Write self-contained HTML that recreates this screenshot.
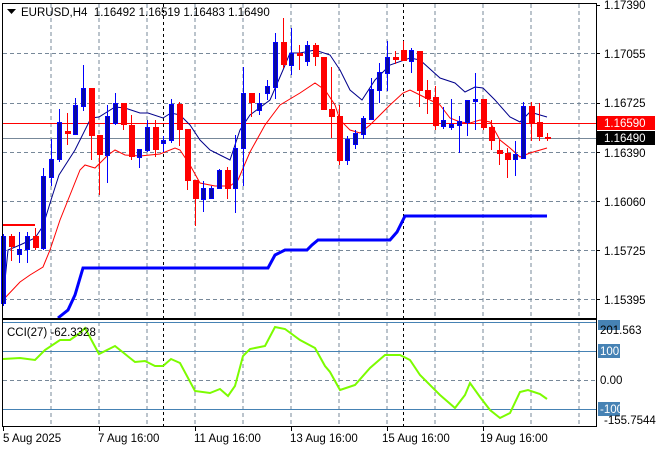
<!DOCTYPE html>
<html><head><meta charset="utf-8"><style>
html,body{margin:0;padding:0;background:#fff;width:660px;height:450px;overflow:hidden}
svg{display:block}
text{font-family:"Liberation Sans",sans-serif;font-size:11.5px;fill:#000}
</style></head><body>
<svg width="660" height="450" viewBox="0 0 660 450" xmlns="http://www.w3.org/2000/svg">
<rect width="660" height="450" fill="#fff"/>
<g stroke="#778899" stroke-width="1" stroke-dasharray="4,3" fill="none">
<path d="M51 4V318M99 4V318M147 4V318M195 4V318M243 4V318M291 4V318M339 4V318M387 4V318M435 4V318M483 4V318M531 4V318M579 4V318"/>
<path d="M3 53.5H596M3 103.5H596M3 152.5H596M3 201.5H596M3 250.5H596M3 299.5H596"/>
<path d="M51 322V426M99 322V426M147 322V426M195 322V426M243 322V426M291 322V426M339 322V426M387 322V426M435 322V426M483 322V426M531 322V426M579 322V426M3 380.5H596"/>
</g>
<path d="M163.5 4V318M403.5 4V318M163.5 322V426M403.5 322V426" stroke="#000" stroke-dasharray="3,3"/>
<path d="M3 123.5H596" stroke="#ff0000"/>
<path d="M3 138.5H596" stroke="#778899"/>
<path d="M3 225H35" stroke="#ff0000" stroke-width="2"/>
<polyline fill="none" stroke="#0000ff" stroke-width="3" points="58,318 68,310 75,295 83,268 268,268 275,255 285,250 307,250 312,245 318,240 390,240 397,232 405,216 547,216"/>
<polyline fill="none" stroke="#00008b" stroke-width="1" points="3,301 8,250 20,245 35,238 43,226 51,200 59,175 75,150 91,118 99,117 115,107 125,108 140,113 148,113 163,118 171,113 180,115 190,125 200,140 210,150 220,155 230,160 240,130 250,115 270,100 283,70 290,53 300,53 315,50 330,55 340,70 350,90 362,100 375,80 390,65 410,58 420,60 440,78 455,83 465,92 475,87 483,88 495,100 510,117 520,122 530,112 540,115 547,117"/>
<polyline fill="none" stroke="#ff0000" stroke-width="1" points="3,300 20,282 30,275 43,267 50,250 60,220 70,195 80,170 85,165 95,168 108,155 115,150 125,155 140,156 160,154 175,148 180,150 190,165 200,183 215,186 230,186 238,180 250,152 265,125 280,105 300,93 315,83 325,90 335,105 340,120 350,130 360,133 370,125 380,115 390,105 403,93 410,90 420,95 430,100 440,105 450,118 460,122 470,123 480,120 490,122 500,140 510,148 520,157 530,153 547,148"/>
<g id="c"></g>
<g>
<!-- candles -->
<g stroke-width="1">
<path stroke="#0000ff" d="M3.5 234V306M19.5 232V263M27.5 232V263M43.5 168V250M51.5 139V186M59.5 109V162M75.5 98V134M83.5 65V111M107.5 105V183M115.5 93V125M139.5 149V168M147.5 120V152M163.5 136V152M171.5 99V143M203.5 181V212M211.5 186V199M219.5 169V188M235.5 135V213M243.5 67V186M259.5 93V115M267.5 80V100M275.5 33V99M291.5 28V75M307.5 41V66M347.5 136V165M355.5 130V149M363.5 116V139M371.5 78V120M379.5 63V103M387.5 41V91M411.5 48V73M443.5 107V129M451.5 99V130M459.5 116V153M467.5 100V136M475.5 73V130M515.5 141V176M523.5 102V159"/>
<path stroke="#ff0000" d="M11.5 234V261M35.5 228V250M67.5 113V145M91.5 88V160M99.5 135V195M123.5 103V130M131.5 115V160M155.5 120V157M179.5 102V146M187.5 129V190M195.5 180V226M227.5 167V199M251.5 93V117M283.5 18V68M299.5 45V70M315.5 43V66M323.5 57V110M331.5 67V138M339.5 105V165M395.5 51V64M403.5 41V61M419.5 51V107M427.5 80V114M435.5 86V130M483.5 99V130M491.5 120V150M499.5 140V165M507.5 148V178M531.5 102V141M539.5 103V141M547.5 133V141"/>
</g>
<g fill="#0a0aa0" stroke="#0000ff">
<rect x="1.5" y="236.5" width="4" height="67"/><rect x="17.5" y="249.5" width="4" height="5"/><rect x="25.5" y="236.5" width="4" height="13"/><rect x="41.5" y="176.5" width="4" height="72"/><rect x="49.5" y="159.5" width="4" height="18"/><rect x="57.5" y="122.5" width="4" height="37"/><rect x="73.5" y="105.5" width="4" height="29"/><rect x="81.5" y="88.5" width="4" height="18"/><rect x="105.5" y="116.5" width="4" height="39"/><rect x="113.5" y="103.5" width="4" height="20"/><rect x="137.5" y="149.5" width="4" height="8"/><rect x="145.5" y="127.5" width="4" height="23"/><rect x="161.5" y="140.5" width="4" height="3"/><rect x="169.5" y="104.5" width="4" height="36"/><rect x="201.5" y="188.5" width="4" height="11"/><rect x="209.5" y="188.5" width="4" height="10"/><rect x="217.5" y="170.5" width="4" height="18"/><rect x="233.5" y="148.5" width="4" height="40"/><rect x="241.5" y="93.5" width="4" height="55"/><rect x="257.5" y="103.5" width="4" height="7"/><rect x="265.5" y="86.5" width="4" height="7"/><rect x="273.5" y="42.5" width="4" height="45"/><rect x="289.5" y="53.5" width="4" height="12"/><rect x="305.5" y="45.5" width="4" height="16"/><rect x="345.5" y="139.5" width="4" height="21"/><rect x="353.5" y="133.5" width="4" height="11"/><rect x="361.5" y="118.5" width="4" height="16"/><rect x="369.5" y="89.5" width="4" height="30"/><rect x="377.5" y="72.5" width="4" height="18"/><rect x="385.5" y="57.5" width="4" height="16"/><rect x="409.5" y="50.5" width="4" height="11"/><rect x="441.5" y="120.5" width="4" height="6"/><rect x="449.5" y="124.5" width="4" height="3"/><rect x="457.5" y="121.5" width="4" height="4"/><rect x="465.5" y="100.5" width="4" height="22"/><rect x="473.5" y="99.5" width="4" height="2"/><rect x="513.5" y="154.5" width="4" height="5"/><rect x="521.5" y="106.5" width="4" height="52"/>
</g>
<g fill="#ff0000">
<rect x="9" y="236" width="6" height="11"/><rect x="33" y="236" width="6" height="12"/><rect x="65" y="131" width="6" height="3"/><rect x="89" y="88" width="6" height="48"/><rect x="97" y="135" width="6" height="20"/><rect x="121" y="103" width="6" height="22"/><rect x="129" y="125" width="6" height="32"/><rect x="153" y="127" width="6" height="23"/><rect x="177" y="104" width="6" height="26"/><rect x="185" y="129" width="6" height="52"/><rect x="193" y="180" width="6" height="19"/><rect x="225" y="170" width="6" height="19"/><rect x="249" y="93" width="6" height="10"/><rect x="281" y="42" width="6" height="23"/><rect x="297" y="53" width="6" height="3"/><rect x="313" y="45" width="6" height="12"/><rect x="321" y="57" width="6" height="53"/><rect x="329" y="109" width="6" height="8"/><rect x="337" y="116" width="6" height="45"/><rect x="393" y="57" width="6" height="3"/><rect x="401" y="50" width="6" height="11"/><rect x="417" y="51" width="6" height="40"/><rect x="425" y="90" width="6" height="9"/><rect x="433" y="97" width="6" height="29"/><rect x="481" y="99" width="6" height="29"/><rect x="489" y="127" width="6" height="14"/><rect x="497" y="150" width="6" height="4"/><rect x="505" y="153" width="6" height="7"/><rect x="529" y="106" width="6" height="18"/><rect x="537" y="122" width="6" height="15"/><rect x="545" y="137" width="6" height="2"/>
</g>
</g>
<!-- CCI -->
<path d="M3 322.5H596M3 351.5H596M3 409.5H596" stroke="#4682b4"/>
<polyline fill="none" stroke="#7cfc00" stroke-width="2" points="3,359 20,358 35,360 45,350 60,340 70,340 80,333 85,328 99,354 115,346 135,362 145,361 155,366 163,366 171,359 180,363 195,391 210,393 220,389 228,396 235,386 243,356 250,349 265,346 275,327 285,329 300,340 315,348 325,366 330,372 340,390 355,385 370,368 385,355 400,355 410,360 420,375 440,395 455,408 465,395 470,383 480,397 490,410 500,418 510,413 520,392 528,390 540,394 547,399"/>
<!-- frames -->
<rect x="2.5" y="3.5" width="594" height="315" fill="none" stroke="#000"/>
<rect x="2.5" y="319.5" width="594" height="107" fill="none" stroke="#000"/>
<path d="M596.5 3V427" stroke="#000"/>
<!-- title -->
<path d="M7 9h9l-4.5 5z" fill="#000"/>
<text x="21" y="16">EURUSD,H4&#160;&#160;1.16492 1.16519 1.16483 1.16490</text>
<text x="7" y="336">CCI(27) -62.3328</text>
<!-- price axis -->
<g>
<path d="M596 5.5h4M596 53.5h4M596 103.5h4M596 152.5h4M596 201.5h4M596 250.5h4M596 299.5h4" stroke="#000"/>
<text x="604" y="9">1.17390</text>
<text x="604" y="58">1.17055</text>
<text x="604" y="107">1.16725</text>
<text x="604" y="157">1.16390</text>
<text x="604" y="206">1.16060</text>
<text x="604" y="255">1.15725</text>
<text x="604" y="304">1.15395</text>
<rect x="597" y="116" width="58" height="14" fill="#ff0000"/>
<text x="604" y="127" style="fill:#fff">1.16590</text>
<rect x="597" y="131" width="58" height="14" fill="#000"/>
<text x="604" y="142" style="fill:#fff">1.16490</text>
<rect x="598" y="320" width="22" height="10" fill="#4682b4"/>
<text x="600" y="334">201.563</text>
<rect x="598" y="344" width="22" height="14" fill="#4682b4"/>
<text x="600" y="355" style="fill:#fff">100</text>
<text x="600" y="384">0.00</text>
<rect x="598" y="402" width="22" height="14" fill="#4682b4"/>
<text x="600" y="413" style="fill:#fff">-100</text>
<text x="604" y="424">-155.7544</text>
</g>
<!-- time axis -->
<path d="M3.5 427v4M99.5 427v4M195.5 427v4M291.5 427v4M387.5 427v4M483.5 427v4" stroke="#000"/>
<text x="3" y="442">5 Aug 2025</text>
<text x="98" y="442">7 Aug 16:00</text>
<text x="194" y="442">11 Aug 16:00</text>
<text x="290" y="442">13 Aug 16:00</text>
<text x="382" y="442">15 Aug 16:00</text>
<text x="480" y="442">19 Aug 16:00</text>
</svg>
</body></html>
